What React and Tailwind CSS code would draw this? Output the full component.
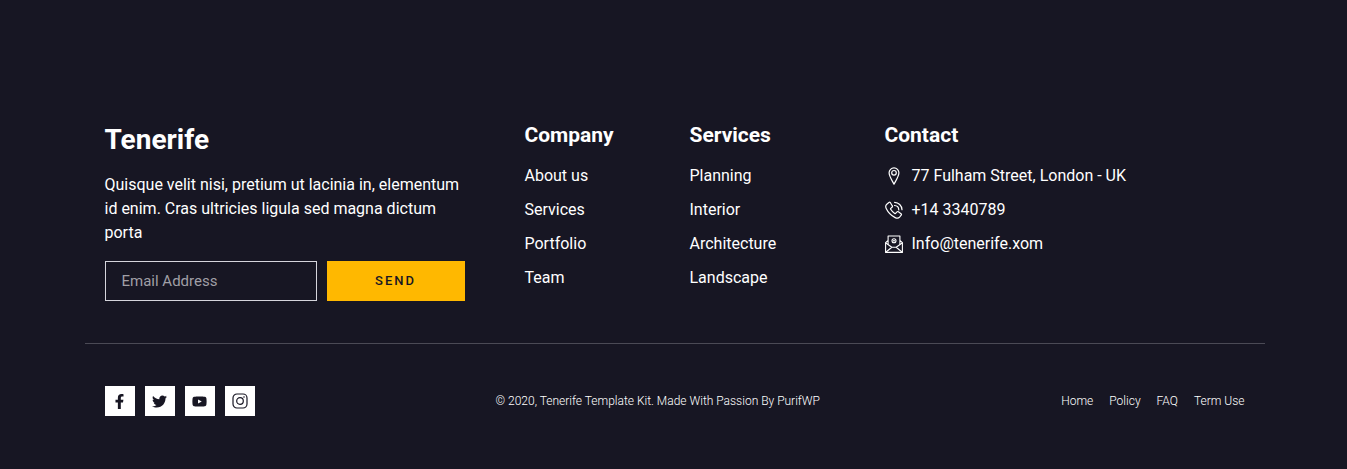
import React from 'react';
import { FaFacebookF, FaTwitter, FaYoutube } from 'react-icons/fa';

const companyLinks = ['About us', 'Services', 'Portfolio', 'Team'];
const serviceLinks = ['Planning', 'Interior', 'Architecture', 'Landscape'];
const legalLinks = ['Home', 'Policy', 'FAQ', 'Term Use'];

function PinIcon() {
  return (
    <svg viewBox="0 0 18 18" className="size-[18px] shrink-0" fill="none" stroke="currentColor" strokeWidth="1.2" aria-hidden="true">
      <path d="M9 17.2C7.4 14 4.1 9.4 4.1 5.8a4.9 4.9 0 0 1 9.8 0C13.9 9.4 10.6 14 9 17.2Z" strokeLinejoin="round" />
      <circle cx="9" cy="5.8" r="2.3" />
    </svg>
  );
}

function PhoneIcon() {
  return (
    <svg viewBox="0 0 18 18" className="size-[18px] shrink-0" fill="none" stroke="currentColor" strokeWidth="1.2" strokeLinecap="round" strokeLinejoin="round" aria-hidden="true">
      <path d="M3.900 1.500 1.800 3.200C.6 4.300.4 5.700 1.200 7.400c2 4.200 4.800 7 9 9.200 1.700.9 3.300.8 4.400-.4l1.600-2c.4-.5.3-1.100-.2-1.500l-2.600-1.900c-.6-.4-1.200-.3-1.600.2l-1 1.200c-.3.4-.7.4-1.100.2-1.800-1.100-3-2.400-4-4.100-.3-.4-.2-.8.2-1.100l1.100-.9c.5-.4.6-1 .2-1.600L5.400 1.700c-.4-.5-1-.6-1.500-.2Z" />
      <path d="M9.600 1.300c4 .1 7.200 3.400 7.400 7.400M9.500 4.500c2.400.1 4.200 2 4.300 4.400" />
    </svg>
  );
}

function MailIcon() {
  return (
    <svg viewBox="0 0 18 18" className="size-[18px] shrink-0" fill="none" stroke="currentColor" strokeWidth="1.1" strokeLinejoin="round" aria-hidden="true">
      <path d="M3.100 9.400V1h11.800v8.400M3.100 5.400.6 7.600v9.800h16.800V7.600l-2.500-2.200" />
      <path d="m.6 7.800 6.200 4.500h4.400l6.200-4.500M.8 17.200l6-4.900M17.200 17.200l-6-4.900" />
      <circle cx="9" cy="5.700" r="2" />
      <circle cx="9" cy="5.700" r=".9" fill="currentColor" stroke="none" />
    </svg>
  );
}

function InstagramIcon() {
  return (
    <svg viewBox="0 0 16 16" className="size-4" fill="none" stroke="currentColor" strokeWidth="1.2" aria-hidden="true">
      <rect x="1" y="1" width="14" height="14" rx="4" />
      <circle cx="8" cy="8" r="3.300" />
      <circle cx="12" cy="4" r=".8" fill="currentColor" stroke="none" />
    </svg>
  );
}

const contacts = [
  { Icon: PinIcon, text: '77 Fulham Street, London - UK', href: '#address' },
  { Icon: PhoneIcon, text: '+14 3340789', href: 'tel:+143340789' },
  { Icon: MailIcon, text: 'Info@tenerife.xom', href: 'mailto:Info@tenerife.xom' },
];

const socials = [
  { Icon: FaFacebookF, label: 'Facebook' },
  { Icon: FaTwitter, label: 'Twitter' },
  { Icon: FaYoutube, label: 'YouTube' },
  { Icon: InstagramIcon, label: 'Instagram' },
];

function LinkColumn({ title, links }) {
  return (
    <nav aria-label={title}>
      <h3 className="text-[21px] leading-5 font-bold">{title}</h3>
      <ul className="mt-[19px] flex flex-col gap-2.5">
        {links.map((link) => (
          <li key={link} className="leading-6">
            <a href="#" className="hover:text-[#ffb800]">{link}</a>
          </li>
        ))}
      </ul>
    </nav>
  );
}

export default function App() {
  return (
    <footer className="min-h-screen bg-[#171623] pt-[125px] pb-[53px] pl-0.5 font-[Roboto,sans-serif] text-base text-white">
      <div className="mx-auto max-w-[1180px]">
        <div className="grid grid-cols-[420fr_165fr_195fr_360fr] border-b border-[#4b4a55] px-5 pb-[42px]">
          <section className="min-w-0 pr-[60px]">
            <h2 className="text-[28px] leading-[30px] font-bold">Tenerife</h2>
            <p className="mt-[18px] leading-6">
              Quisque velit nisi, pretium ut lacinia in, elementum id enim. Cras ultricies ligula sed magna dictum porta
            </p>
            <form className="mt-4 flex gap-2.5" onSubmit={(e) => e.preventDefault()}>
              <input
                type="email"
                aria-label="Email Address"
                placeholder="Email Address"
                className="h-10 w-0 min-w-0 grow border border-[#d5d5dc] bg-transparent px-4 text-[15px] placeholder:text-[#a09fa6]"
              />
              <button type="submit" className="h-10 w-[138px] shrink-0 bg-[#ffb800] text-[13px] font-medium tracking-[2px] text-[#171623]">
                SEND
              </button>
            </form>
          </section>
          <LinkColumn title="Company" links={companyLinks} />
          <LinkColumn title="Services" links={serviceLinks} />
          <section>
            <h3 className="text-[21px] leading-5 font-bold">Contact</h3>
            <ul className="mt-[19px] flex flex-col gap-2.5">
              {contacts.map(({ Icon, text, href }) => (
                <li key={text} className="leading-6">
                  <a href={href} className="flex items-center gap-[9px]">
                    <Icon />
                    {text}
                  </a>
                </li>
              ))}
            </ul>
          </section>
        </div>
        <div className="grid grid-cols-[391fr_405fr_344fr] items-center px-5 pt-[42px] text-xs font-light">
          <ul className="flex gap-2.5">
            {socials.map(({ Icon, label }) => (
              <li key={label}>
                <a href="#" aria-label={label} className="flex size-[30px] items-center justify-center bg-white text-[15px] text-[#171623]">
                  <Icon />
                </a>
              </li>
            ))}
          </ul>
          <p>© 2020, Tenerife Template Kit. Made With Passion By PurifWP</p>
          <ul className="flex justify-end gap-4">
            {legalLinks.map((link) => (
              <li key={link}>
                <a href="#">{link}</a>
              </li>
            ))}
          </ul>
        </div>
      </div>
    </footer>
  );
}
